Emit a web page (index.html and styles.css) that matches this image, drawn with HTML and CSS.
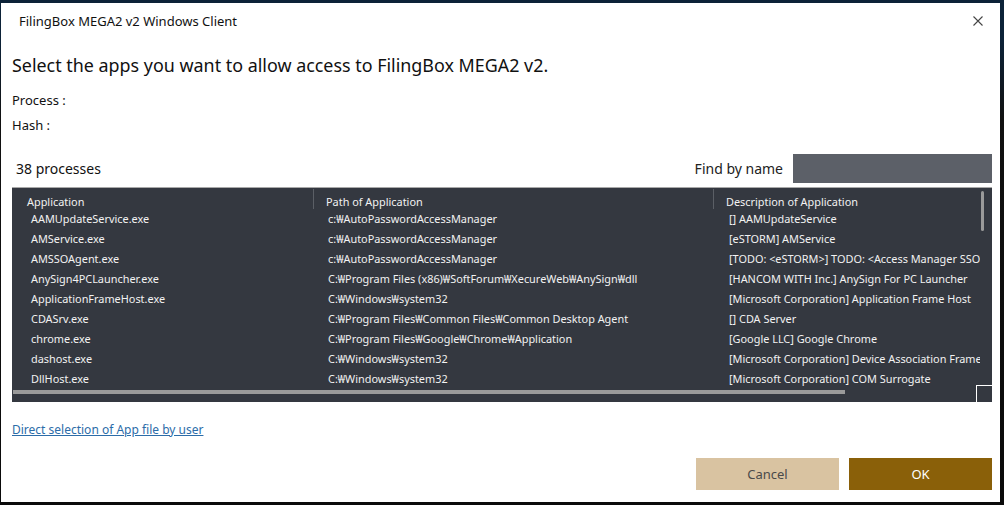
FILE: index.html
```html
<!DOCTYPE html>
<html>
<head>
<meta charset="utf-8">
<link rel="stylesheet" href="styles.css">
</head>
<body>
<div class="dialog">
  <div class="titlebar">
    <span class="title">FilingBox MEGA2 v2 Windows Client</span>
    <svg class="close" width="10" height="10" viewBox="0 0 10 10"><path d="M0.5 0.5 L9.5 9.5 M9.5 0.5 L0.5 9.5" stroke="#444" stroke-width="1.1" fill="none"/></svg>
  </div>
  <div class="content">
    <h1 class="heading">Select the apps you want to allow access to FilingBox MEGA2 v2.</h1>
    <div class="info">Process :</div>
    <div class="info">Hash :</div>
    <div class="toolbar">
      <span class="count">38 processes</span>
      <div class="find">
        <span class="find-label">Find by name</span>
        <div class="find-input"></div>
      </div>
    </div>
    <div class="table">
      <div class="thead">
        <div class="th c1">Application</div>
        <div class="th c2">Path of Application</div>
        <div class="th c3">Description of Application</div>
      </div>
      <div class="tbody">
        <div class="tr"><div class="td c1">AAMUpdateService.exe</div><div class="td c2">c:₩AutoPasswordAccessManager</div><div class="td c3">[] AAMUpdateService</div></div>
        <div class="tr"><div class="td c1">AMService.exe</div><div class="td c2">c:₩AutoPasswordAccessManager</div><div class="td c3">[eSTORM] AMService</div></div>
        <div class="tr"><div class="td c1">AMSSOAgent.exe</div><div class="td c2">c:₩AutoPasswordAccessManager</div><div class="td c3">[TODO: &lt;eSTORM&gt;] TODO: &lt;Access Manager SSO Agent&gt;</div></div>
        <div class="tr"><div class="td c1">AnySign4PCLauncher.exe</div><div class="td c2">C:₩Program Files (x86)₩SoftForum₩XecureWeb₩AnySign₩dll</div><div class="td c3">[HANCOM WITH Inc.] AnySign For PC Launcher</div></div>
        <div class="tr"><div class="td c1">ApplicationFrameHost.exe</div><div class="td c2">C:₩Windows₩system32</div><div class="td c3">[Microsoft Corporation] Application Frame Host</div></div>
        <div class="tr"><div class="td c1">CDASrv.exe</div><div class="td c2">C:₩Program Files₩Common Files₩Common Desktop Agent</div><div class="td c3">[] CDA Server</div></div>
        <div class="tr"><div class="td c1">chrome.exe</div><div class="td c2">C:₩Program Files₩Google₩Chrome₩Application</div><div class="td c3">[Google LLC] Google Chrome</div></div>
        <div class="tr"><div class="td c1">dashost.exe</div><div class="td c2">C:₩Windows₩system32</div><div class="td c3">[Microsoft Corporation] Device Association Framework</div></div>
        <div class="tr"><div class="td c1">DllHost.exe</div><div class="td c2">C:₩Windows₩system32</div><div class="td c3">[Microsoft Corporation] COM Surrogate</div></div>
      </div>
      <div class="vscroll"></div>
      <div class="hscroll"></div>
      <div class="corner"></div>
    </div>
    <a class="link" href="#">Direct selection of App file by user</a>
    <div class="buttons">
      <button class="btn cancel">Cancel</button>
      <button class="btn ok">OK</button>
    </div>
  </div>
</div>
</body>
</html>
```

FILE: styles.css
```css
html, body {
  margin: 0;
  padding: 0;
}
body {
  width: 1004px;
  height: 505px;
  overflow: hidden;
  background: linear-gradient(to bottom, #0c2238 0px, #0c2238 40px, #111 120px, #0a0a0a 100%);
  font-family: "Noto Sans", "Noto Sans CJK KR", sans-serif;
  color: #1a1a1a;
}
.dialog {
  margin: 3px 0 0 1px;
  width: 999px;
  height: 499px;
  background: #fff;
  position: relative;
  display: flex;
  flex-direction: column;
}
.titlebar {
  height: 36px;
  display: flex;
  align-items: center;
  justify-content: space-between;
  padding: 0 17px 0 18px;
}
.title {
  font-size: 13px;
  color: #111;
}
.close {
  display: block;
}
.content {
  padding: 0 8px 0 11px;
  display: flex;
  flex-direction: column;
}
.heading {
  font-weight: normal;
  font-size: 17.9px;
  margin: 14px 0 0 0;
  line-height: 24px;
  color: #111;
}
.info {
  font-size: 13px;
  line-height: 25px;
  color: #111;
}
.info:first-of-type {
  margin-top: 11px;
}
.toolbar {
  margin-top: 15px;
  height: 30px;
  display: flex;
  align-items: center;
  justify-content: space-between;
}
.count {
  font-size: 14px;
  padding-left: 4px;
  color: #111;
}
.find {
  display: flex;
  align-items: center;
  gap: 10px;
}
.find-label {
  font-size: 14px;
  color: #222;
}
.find-input {
  width: 199px;
  height: 29px;
  background: #5c6068;
}
.table {
  margin-top: 4px;
  width: 980px;
  height: 214px;
  background: #343840;
  border-top: 1px solid #a9a9a9;
  position: relative;
  overflow: hidden;
  font-size: 10.9px;
  color: #f2f2f2;
}
.thead {
  display: flex;
  height: 20px;
}
.th {
  box-sizing: border-box;
  line-height: 18px;
  border-right: 1px solid #5b5f66;
  height: 20px;
  padding-top: 4px;
  margin-top: 1px;
}
.th.c1 { padding-left: 15px; }
.th.c2 { padding-left: 12px; }
.th.c3 { padding-left: 12px; border-right: none; }
.c1 { width: 302px; flex: none; }
.c2 { width: 400px; flex: none; }
.c3 { width: 266px; flex: none; white-space: nowrap; overflow: hidden; }
.tr {
  display: flex;
  height: 20px;
  align-items: center;
  white-space: nowrap;
}
.td {
  box-sizing: border-box;
  overflow: hidden;
}
.td.c1 { padding-left: 19px; }
.td.c2 { padding-left: 14px; }
.td.c3 { padding-left: 15px; }
.vscroll {
  position: absolute;
  right: 8px;
  top: 3px;
  width: 3px;
  height: 40px;
  background: #9a9a9a;
  border-radius: 2px;
}
.hscroll {
  position: absolute;
  left: 1px;
  bottom: 8px;
  width: 832px;
  height: 4px;
  background: #9a9a9a;
}
.corner {
  position: absolute;
  right: 0;
  bottom: 0;
  width: 15px;
  height: 16px;
  border-top: 1px solid #fff;
  border-left: 1px solid #fff;
  background: #343840;
}
.link {
  margin-top: 19px;
  font-size: 12px;
  color: #2c6ca8;
  text-decoration: underline;
  align-self: flex-start;
}
.buttons {
  margin-top: 20px;
  display: flex;
  justify-content: flex-end;
  gap: 10px;
}
.btn {
  width: 143px;
  height: 32px;
  border: none;
  font-family: "Noto Sans", "Noto Sans CJK KR", sans-serif;
  font-size: 13px;
}
.btn.cancel {
  background: #d9c3a1;
  color: #4a4a4a;
}
.btn.ok {
  background: #8a6009;
  color: #fff;
}
```
